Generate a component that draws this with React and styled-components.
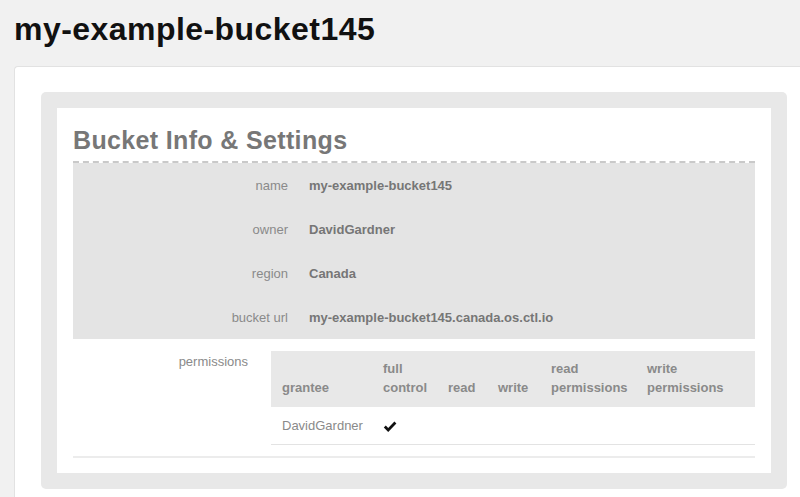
import React from 'react';
import styled, { createGlobalStyle } from 'styled-components';

const GlobalStyle = createGlobalStyle`
  body {
    margin: 0;
    background: #f1f1f1;
    font-family: "Liberation Sans", Arial, Helvetica, sans-serif;
  }
`;

const Page = styled.div`
  padding: 11px 0 0 14px;
`;

const Title = styled.h1`
  margin: 0;
  font-size: 32px;
  line-height: 36px;
  letter-spacing: 0.45px;
  font-weight: 700;
  color: #111;
`;

const Card = styled.div`
  margin-top: 19px;
  background: #fff;
  border: 1px solid #e2e2e2;
  border-right: none;
  border-radius: 4px 0 0 4px;
  padding: 25px 13px 24px 26px;
`;

const Frame = styled.div`
  background: #e8e8e8;
  border-radius: 5px;
  padding: 16px;
`;

const Inner = styled.div`
  background: #fff;
  padding: 18px 16px 15px;
`;

const Heading = styled.h2`
  margin: 0;
  font-size: 25px;
  line-height: 29px;
  letter-spacing: 0.35px;
  font-weight: 700;
  color: #777;
  padding-bottom: 6px;
  border-bottom: 2px dashed #c9c9c9;
`;

const InfoBox = styled.div`
  background: #e4e4e4;
`;

const Row = styled.div`
  display: grid;
  grid-template-columns: ${p => p.labelWidth}px 1fr;
  column-gap: ${p => p.gap}px;
  align-items: ${p => (p.top ? 'start' : 'center')};
  min-height: ${p => (p.top ? 0 : 44)}px;
`;

const Label = styled.div`
  text-align: right;
  font-size: 13px;
  line-height: 19px;
  color: #8a8a8a;
  padding-top: ${p => p.pad || 0}px;
`;

const Value = styled.div`
  font-size: 13px;
  line-height: 19px;
  font-weight: 700;
  color: #767676;
`;

const PermRow = styled(Row)`
  margin-top: 12px;
`;

const Table = styled.table`
  border-collapse: collapse;
  width: 100%;
  table-layout: fixed;
  font-size: 13px;
  line-height: 19px;
`;

const Th = styled.th`
  background: #e8e8e8;
  text-align: left;
  vertical-align: bottom;
  font-weight: 700;
  color: #8a8a8a;
  padding: 8px 11px 10px;
  width: ${p => (p.w ? `${p.w}px` : 'auto')};
  box-sizing: border-box;
`;

const Td = styled.td`
  color: #8a8a8a;
  padding: 9px 11px;
  border-bottom: 1px solid #e3e3e3;
  vertical-align: middle;
`;

const Rule = styled.hr`
  margin: 11px 0 0;
  border: none;
  border-top: 2px solid #ececec;
`;

const Check = () => (
  <svg width="14" height="12" viewBox="0 0 14 12" style={{ display: 'block', marginTop: 2 }}>
    <path d="M0.8 6.6 L2.8 4.6 L5.2 7 L11.4 0.6 L13.4 2.6 L5.2 11 Z" fill="#111" />
  </svg>
);

const info = [
  ['name', 'my-example-bucket145'],
  ['owner', 'DavidGardner'],
  ['region', 'Canada'],
  ['bucket url', 'my-example-bucket145.canada.os.ctl.io'],
];

const columns = [
  { label: ['grantee'], w: 101 },
  { label: ['full', 'control'], w: 65 },
  { label: ['read'], w: 50 },
  { label: ['write'], w: 53 },
  { label: ['read', 'permissions'], w: 96 },
  { label: ['write', 'permissions'] },
];

export default function App() {
  return (
    <>
      <GlobalStyle />
      <Page>
        <Title>my-example-bucket145</Title>
        <Card>
          <Frame>
            <Inner>
              <Heading>Bucket Info &amp; Settings</Heading>
              <InfoBox>
                {info.map(([k, v]) => (
                  <Row key={k} labelWidth={215} gap={21}>
                    <Label>{k}</Label>
                    <Value>{v}</Value>
                  </Row>
                ))}
              </InfoBox>
              <PermRow labelWidth={175} gap={23} top>
                <Label pad={1}>permissions</Label>
                <Table>
                  <thead>
                    <tr>
                      {columns.map((c, i) => (
                        <Th key={i} w={c.w}>
                          {c.label.map((l, j) => (
                            <React.Fragment key={j}>
                              {j > 0 && <br />}
                              {l}
                            </React.Fragment>
                          ))}
                        </Th>
                      ))}
                    </tr>
                  </thead>
                  <tbody>
                    <tr>
                      <Td>DavidGardner</Td>
                      <Td><Check /></Td>
                      <Td />
                      <Td />
                      <Td />
                      <Td />
                    </tr>
                  </tbody>
                </Table>
              </PermRow>
              <Rule />
            </Inner>
          </Frame>
        </Card>
      </Page>
    </>
  );
}
